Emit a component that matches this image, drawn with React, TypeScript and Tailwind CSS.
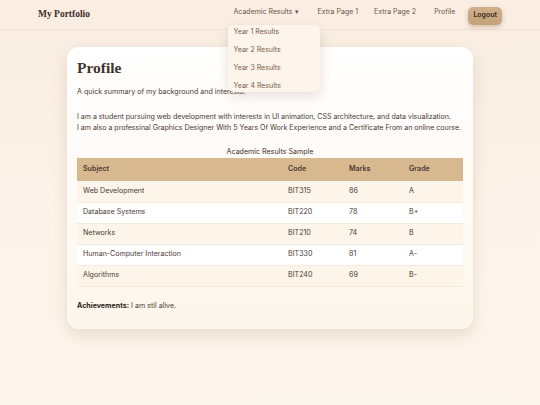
import React from "react";

const rows = [
  { subject: "Web Development", code: "BIT315", marks: "86", grade: "A" },
  { subject: "Database Systems", code: "BIT220", marks: "78", grade: "B+" },
  { subject: "Networks", code: "BIT210", marks: "74", grade: "B" },
  { subject: "Human-Computer Interaction", code: "BIT330", marks: "81", grade: "A-" },
  { subject: "Algorithms", code: "BIT240", marks: "69", grade: "B-" },
];

const serif = { fontFamily: '"Liberation Serif", "DejaVu Serif", serif' };

export default function App() {
  return (
    <div
      className="relative w-[540px] h-[405px] overflow-hidden bg-gradient-to-b from-[#f9ede1] via-[#fcf3ea] to-[#fdf6ed] text-[#3f302b]"
      style={{ fontFamily: 'Inter, "Noto Sans", sans-serif' }}
    >
      {/* Navbar */}
      <nav className="relative z-20 h-[30px] flex items-center justify-between pl-[38px] pr-[38px] border-b border-[#f1e2d4] bg-[#faeee3]">
        <span className="text-[9.5px] font-bold text-[#3e2c27]" style={serif}>
          My Portfolio
        </span>
        <div className="flex items-start text-[7px] text-[#6e5248]">
          <div className="relative pt-[2px]">
            <span>Academic Results ▾</span>
            <div className="absolute left-[-6px] top-[20px] w-[92px] rounded-[6px] bg-[#fdf5ec] shadow-[0_4px_12px_rgba(120,80,50,0.18)] flex flex-col pl-[6px] pt-[2px] pb-[1px] gap-[7.5px] text-[#7a5a4c]">
              <span>Year 1 Results</span>
              <span>Year 2 Results</span>
              <span>Year 3 Results</span>
              <span>Year 4 Results</span>
            </div>
          </div>
          <span className="ml-[19px] pt-[2px]">Extra Page 1</span>
          <span className="ml-[16px] pt-[2px]">Extra Page 2</span>
          <span className="ml-[18px] pt-[2px]">Profile</span>
          <button className="ml-[13px] mt-[2px] h-[18px] px-[5px] rounded-[5px] bg-gradient-to-b from-[#cfb08a] to-[#c4a27a] text-[#3a2820] font-semibold text-[7px] shadow-[0_2px_5px_rgba(120,80,40,0.3)]">
            Logout
          </button>
        </div>
      </nav>

      {/* Card */}
      <div className="flex justify-center pt-[17px]">
        <div className="w-[406px] rounded-[12px] bg-gradient-to-b from-white to-[#fdf6ec] shadow-[0_6px_16px_rgba(120,80,50,0.16)] px-[10px] pt-[12px] pb-[18px]">
          <h1 className="text-[15.5px] font-bold text-[#45322c] leading-[18px]" style={serif}>
            Profile
          </h1>
          <p className="text-[7.1px] leading-[10px] mt-[10px] text-[#4a3a34]">
            A quick summary of my background and interests.
          </p>
          <p className="text-[7.1px] leading-[11px] mt-[14px] text-[#4a3a34] whitespace-nowrap tracking-[-0.005em]">
            I am a student pursuing web development with interests in UI animation, CSS architecture, and data visualization.
            <br />
            I am also a professinal Graphics Designer With 5 Years Of Work Experience and a Certificate From an online course.
          </p>
          <div className="text-center text-[7.1px] leading-[10px] mt-[14px] text-[#3f302b]">Academic Results Sample</div>
          <table className="w-full text-[7.1px] text-[#4a3a34] border-collapse mt-[1px]">
            <thead>
              <tr className="bg-[#d8b88e] h-[23px]">
                <th className="text-left font-semibold pl-[6px] w-[211px]">Subject</th>
                <th className="text-left font-semibold w-[61px]">Code</th>
                <th className="text-left font-semibold w-[60px]">Marks</th>
                <th className="text-left font-semibold">Grade</th>
              </tr>
            </thead>
            <tbody>
              {rows.map((r, i) => (
                <tr
                  key={r.code}
                  className={`h-[21px] border-b border-[#f5ebe0] ${i % 2 === 0 ? "bg-[#fdf4ea]" : "bg-white"}`}
                >
                  <td className="pl-[6px]">{r.subject}</td>
                  <td>{r.code}</td>
                  <td>{r.marks}</td>
                  <td>{r.grade}</td>
                </tr>
              ))}
            </tbody>
          </table>
          <p className="text-[7.1px] leading-[10px] mt-[14px] text-[#4a3a34]">
            <span className="font-bold text-[#2f2420]">Achievements:</span> I am stil alive.
          </p>
        </div>
      </div>
    </div>
  );
}
